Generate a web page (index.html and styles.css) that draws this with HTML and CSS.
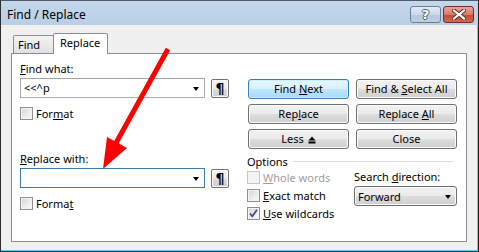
FILE: index.html
```html
<!DOCTYPE html>
<html>
<head>
<meta charset="utf-8">
<link rel="stylesheet" href="styles.css">
</head>
<body>
<div class="window">
  <div class="titlebar">
    <span class="title">Find / Replace</span>
    <div class="caption-btns">
      <div class="cap help"><span>?</span></div>
      <div class="cap close">
        <svg width="14" height="11" viewBox="0 0 14 11">
          <path d="M2 1.5 L7 5.5 L12 1.5 M2 9.5 L7 5.5 L12 9.5" fill="none" stroke="#5a2a24" stroke-width="4" stroke-linecap="square"/>
          <path d="M2 1.5 L7 5.5 L12 1.5 M2 9.5 L7 5.5 L12 9.5" fill="none" stroke="#ffffff" stroke-width="2.2" stroke-linecap="square"/>
        </svg>
      </div>
    </div>
  </div>
  <div class="client">
    <div class="tabs">
      <div class="tab">Find</div>
      <div class="tab active">Replace</div>
    </div>
    <div class="panel">
      <div class="left">
        <div class="label"><u>F</u>ind what:</div>
        <div class="combo-row">
          <div class="combo"><span class="val">&lt;&lt;^p</span><span class="arrow"></span></div>
          <div class="pbtn">¶</div>
        </div>
        <div class="check fmt"><span class="cb"></span><span>For<u>m</u>at</span></div>
        <div class="label replace-label"><u>R</u>eplace with:</div>
        <div class="combo-row">
          <div class="combo focus"><span class="val"></span><span class="arrow"></span></div>
          <div class="pbtn">¶</div>
        </div>
        <div class="check fmt"><span class="cb"></span><span>Forma<u>t</u></span></div>
      </div>
      <div class="right">
        <div class="btn-grid">
          <div class="btn default"><span>Find <u>N</u>ext</span></div>
          <div class="btn"><span>Find &amp; <u>S</u>elect All</span></div>
          <div class="btn"><span>Rep<u>l</u>ace</span></div>
          <div class="btn"><span>Replace <u>A</u>ll</span></div>
          <div class="btn"><span>Less</span><svg class="less-icon" width="8" height="8" viewBox="0 0 8 8"><path d="M4 0.5 L7.5 4.5 L0.5 4.5 Z" fill="#000"/><rect x="0.5" y="5.5" width="7" height="2" fill="#000"/></svg></div>
          <div class="btn"><span>Close</span></div>
        </div>
        <div class="options-head"><span>Options</span><span class="rule"></span></div>
        <div class="options-body">
          <div class="opt-col">
            <div class="check disabled"><span class="cb"></span><span><u>W</u>hole words</span></div>
            <div class="check"><span class="cb"></span><span><u>E</u>xact match</span></div>
            <div class="check"><span class="cb checked"><svg width="11" height="11" viewBox="0 0 11 11"><path d="M2 5.5 L4.3 8.3 L9 1.8" fill="none" stroke="#3b4f86" stroke-width="1.8"/></svg></span><span><u>U</u>se wildcards</span></div>
          </div>
          <div class="dir-col">
            <div class="dir-label">Search <u>d</u>irection:</div>
            <div class="select"><span>Forward</span><span class="arrow"></span></div>
          </div>
        </div>
      </div>
    </div>
  </div>
  <svg class="annot" width="479" height="252" viewBox="0 0 479 252">
    <line x1="168" y1="49" x2="116" y2="143" stroke="#ff0000" stroke-width="5"/>
    <polygon points="107,137 127,148 103,169" fill="#ff0000"/>
  </svg>
</div>
</body>
</html>
```

FILE: styles.css
```css
* { box-sizing: border-box; }
html, body { margin: 0; padding: 0; background: #ffffff; }
body {
  font-family: "Noto Sans", "Open Sans", sans-serif;
  font-size: 11px;
  color: #000;
}
u { text-decoration: underline; text-underline-offset: 1px; }

.window {
  position: relative;
  width: 479px;
  height: 252px;
  display: flex;
  flex-direction: column;
  border-left: 1px solid #2c2c2c;
  border-top: 1px solid #4d5b6a;
  border-right: 1px solid #1e1e1e;
  border-bottom: 1px solid #2a3a40;
  background: #f0f0f0;
}

.titlebar {
  height: 24px;
  flex: none;
  display: flex;
  align-items: center;
  justify-content: space-between;
  padding-left: 6px;
  background: linear-gradient(#c4d7eb, #b9cfe6);
}
.title {
  font-size: 12px;
  color: #000;
  margin-top: 3px;
}
.caption-btns {
  display: flex;
  gap: 2px;
  margin-right: 4px;
  margin-top: 3px;
}
.cap {
  height: 17px;
  border-radius: 3px;
  display: flex;
  align-items: center;
  justify-content: center;
}
.help {
  width: 31px;
  border: 1px solid #6c7f96;
  background: linear-gradient(#e3ebf4 0%, #cbd9e8 50%, #b4c7dc 51%, #bcd0e4 100%);
}
.help span {
  font-family: "DejaVu Sans", sans-serif;
  font-weight: bold;
  font-size: 13px;
  line-height: 13px;
  color: #fff;
  text-shadow: -1px 0 #4c5c70, 1px 0 #4c5c70, 0 -1px #4c5c70, 0 1px #4c5c70;
}
.close {
  width: 31px;
  border: 1px solid #7a2a22;
  background: linear-gradient(#e8a598 0%, #d77a68 50%, #c14a36 51%, #cf6a52 100%);
}

.client {
  flex: 1;
  display: flex;
  flex-direction: column;
  padding: 0 0 0 10px;
  border-right: 1px solid #5fcfec;
  border-bottom: 1px solid #5fcfec;
}

.tabs {
  display: flex;
  align-items: flex-end;
  height: 20px;
  margin-top: 8px;
  margin-left: 2px;
  position: relative;
  z-index: 2;
}
.tab {
  height: 18px;
  border: 1px solid #898c95;
  border-bottom: none;
  padding: 0 4px;
  line-height: 17px;
  background: linear-gradient(#f3f3f3, #e1e1e1);
  width: 41px;
  border-radius: 2px 2px 0 0;
}
.tab.active {
  width: 55px;
  height: 21px;
  margin-left: -1px;
  margin-bottom: -1px;
  background: #ffffff;
  padding: 0 6px;
  line-height: 18px;
}

.panel {
  width: 456px;
  height: 189px;
  border: 1px solid #898c95;
  background: #ffffff;
  display: flex;
  padding: 0 9px 0 8px;
  gap: 19px;
}

.left {
  width: 209px;
  display: flex;
  flex-direction: column;
  padding-top: 7px;
}
.label {
  line-height: 15px;
  margin-bottom: 2px;
}
.replace-label { margin-top: 29px; }

.combo-row {
  display: flex;
  gap: 6px;
  height: 20px;
}
.combo {
  width: 185px;
  height: 20px;
  border: 1px solid #abadb3;
  border-top-color: #a0a3aa;
  background: #fff;
  display: flex;
  align-items: center;
  justify-content: space-between;
  padding: 0 5px 0 3px;
}
.combo.focus {
  border-color: #3d7bad;
}
.combo .val { line-height: 16px; }
.arrow {
  width: 0;
  height: 0;
  border-left: 3.5px solid transparent;
  border-right: 3.5px solid transparent;
  border-top: 4px solid #000;
  margin-top: 1px;
}
.pbtn {
  width: 18px;
  height: 19px;
  margin-top: 1px;
  border: 1px solid #707070;
  border-radius: 2px;
  background: linear-gradient(#f2f2f2 0%, #ebebeb 50%, #dddddd 51%, #cfcfcf 100%);
  box-shadow: inset 0 0 0 1px #fbfbfb;
  font-family: "DejaVu Sans", sans-serif;
  font-weight: bold;
  font-size: 14px;
  line-height: 17px;
  text-align: center;
}

.check {
  display: flex;
  align-items: center;
  gap: 3px;
  height: 18px;
}
.fmt {
  margin-top: 6px;
}
.cb {
  width: 13px;
  height: 13px;
  flex: none;
  border: 1px solid #8e8f8f;
  background: linear-gradient(135deg, #cfd2d6 0%, #eeeeee 60%, #fbfbfb 100%);
  box-shadow: inset 0 0 0 1px #f4f4f4;
  display: flex;
  align-items: center;
  justify-content: center;
}
.cb svg { display: block; }
.check.disabled { color: #a0a0a0; }
.check.disabled .cb {
  border-color: #c7c7c7;
  background: #f4f4f4;
  box-shadow: none;
}

.right {
  width: 209px;
  padding-top: 25px;
  display: flex;
  flex-direction: column;
}
.btn-grid {
  display: grid;
  grid-template-columns: 101px 101px;
  grid-auto-rows: 20px;
  column-gap: 7px;
  row-gap: 5px;
}
.btn {
  border: 1px solid #707070;
  border-radius: 3px;
  background: linear-gradient(#f2f2f2 0%, #ebebeb 50%, #dddddd 51%, #cfcfcf 100%);
  box-shadow: inset 0 0 0 1px #fbfbfb;
  display: flex;
  align-items: center;
  justify-content: center;
  gap: 4px;
  line-height: 16px;
}
.btn.default {
  border-color: #3c7fb1;
  background: linear-gradient(#eaf6fd 0%, #d9f0fc 50%, #bee6fd 51%, #a7d9f5 100%);
  box-shadow: inset 0 0 0 1px #c5f3ff;
}
.less-icon { display: block; margin-top: 1px; }

.options-head {
  display: flex;
  align-items: center;
  height: 14px;
  margin-top: 5px;
  margin-left: -1px;
}
.rule {
  flex: 1;
  height: 1px;
  background: #d5dfe5;
  margin-left: 5px;
  margin-right: 4px;
}
.options-body {
  display: flex;
  margin-left: -1px;
  margin-top: 0px;
}
.opt-col {
  width: 107px;
  display: flex;
  flex-direction: column;
}
.dir-col {
  display: flex;
  flex-direction: column;
}
.dir-label {
  height: 18px;
  line-height: 18px;
}
.select {
  width: 103px;
  height: 20px;
  border: 1px solid #707070;
  border-radius: 3px;
  background: linear-gradient(#f2f2f2 0%, #ebebeb 50%, #dddddd 51%, #cfcfcf 100%);
  box-shadow: inset 0 0 0 1px #fbfbfb;
  display: flex;
  align-items: center;
  justify-content: space-between;
  padding: 0 5px 0 3px;
}

.annot {
  position: absolute;
  left: -1px;
  top: -1px;
  pointer-events: none;
}
```
